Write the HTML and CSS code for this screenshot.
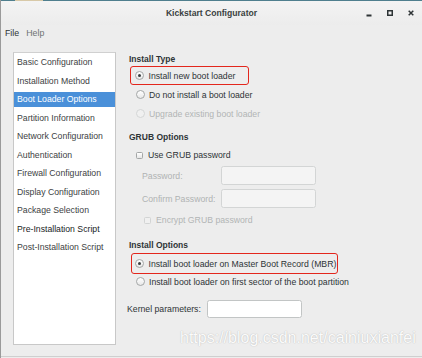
FILE: index.html
```html
<!DOCTYPE html>
<html>
<head>
<meta charset="utf-8">
<title>Kickstart Configurator</title>
<link rel="stylesheet" href="styles.css">
</head>
<body>
<div class="window">
  <div class="titlebar">
    <div class="topline"><span class="topline-beige"></span></div>
    <div class="tb-spacer"></div>
    <div class="title">Kickstart Configurator</div>
    <div class="controls">
      <span class="ctl">
        <svg width="8" height="8" viewBox="0 0 8 8"><rect x="1.5" y="5.5" width="5" height="2" fill="#2e3436"/></svg>
      </span>
      <span class="ctl">
        <svg width="8" height="8" viewBox="0 0 8 8"><rect x="1.75" y="1.75" width="4.5" height="4.5" fill="none" stroke="#2e3436" stroke-width="1.5"/></svg>
      </span>
      <span class="ctl">
        <svg width="8" height="8" viewBox="0 0 8 8"><path d="M1.7 1.7 L6.3 6.3 M6.3 1.7 L1.7 6.3" stroke="#2e3436" stroke-width="1.5" fill="none"/></svg>
      </span>
    </div>
  </div>
  <div class="menubar">
    <span class="menu-item">File</span>
    <span class="menu-item menu-dim">Help</span>
  </div>
  <div class="main">
    <ul class="sidebar">
      <li class="side-item">Basic Configuration</li>
      <li class="side-item">Installation Method</li>
      <li class="side-item side-selected">Boot Loader Options</li>
      <li class="side-item">Partition Information</li>
      <li class="side-item">Network Configuration</li>
      <li class="side-item">Authentication</li>
      <li class="side-item">Firewall Configuration</li>
      <li class="side-item">Display Configuration</li>
      <li class="side-item">Package Selection</li>
      <li class="side-item side-dark">Pre-Installation Script</li>
      <li class="side-item">Post-Installation Script</li>
    </ul>
    <div class="panel">
      <div class="heading">Install Type</div>
      <div class="annot annot-type">
        <span class="radio radio-checked"></span><span class="opt-text">Install new boot loader</span>
      </div>
      <div class="opt-row"><span class="radio"></span><span class="opt-text">Do not install a boot loader</span></div>
      <div class="opt-row opt-disabled"><span class="radio radio-disabled"></span><span class="opt-text">Upgrade existing boot loader</span></div>

      <div class="heading heading-grub">GRUB Options</div>
      <div class="check-row"><span class="check"></span><span class="opt-text">Use GRUB password</span></div>
      <div class="field-row">
        <span class="field-label">Password:</span><span class="entry entry-disabled"></span>
      </div>
      <div class="field-row field-row-2">
        <span class="field-label">Confirm Password:</span><span class="entry entry-disabled"></span>
      </div>
      <div class="check-row check-row-sub opt-disabled"><span class="check check-disabled"></span><span class="opt-text">Encrypt GRUB password</span></div>

      <div class="heading heading-opts">Install Options</div>
      <div class="annot annot-mbr">
        <span class="radio radio-checked"></span><span class="opt-text">Install boot loader on Master Boot Record (MBR)</span>
      </div>
      <div class="opt-row opt-row-short"><span class="radio"></span><span class="opt-text">Install boot loader on first sector of the boot partition</span></div>

      <div class="kernel-row">
        <span class="kernel-label">Kernel parameters:</span><span class="entry entry-kernel"></span>
      </div>
    </div>
  </div>
  <div class="bottomline"></div>
  <div class="watermark">https://blog.csdn.net/cainiuxianfei</div>
</div>
</body>
</html>
```

FILE: styles.css
```css
* { box-sizing: border-box; }
html, body { margin: 0; padding: 0; }
body {
  width: 422px;
  height: 358px;
  overflow: hidden;
  background: #ededed;
  font-family: "Liberation Sans", Arial, sans-serif;
  font-size: 8.7px;
  color: #2e3436;
}
.window {
  position: relative;
  width: 422px;
  height: 358px;
  background: #ededed;
  border-left: 1px solid #9a9a9a;
  display: flex;
  flex-direction: column;
}
.titlebar {
  position: relative;
  height: 25px;
  display: grid;
  grid-template-columns: 1fr auto 1fr;
  align-items: center;
  background: linear-gradient(#f4f4f4, #ececec);
}
.topline {
  position: absolute;
  left: 0; right: 0; top: 0;
  height: 1px;
  background: #4f7f8e;
}
.topline-beige {
  position: absolute;
  left: 14px; top: 0;
  width: 28px; height: 1px;
  background: #d8c9a8;
}
.title {
  font-weight: bold;
  font-size: 8.6px;
  color: #3a3f40;
  padding-top: 1px;
}
.controls {
  display: flex;
  justify-content: flex-end;
  align-items: center;
  gap: 7px;
  padding-right: 4px;
}
.ctl {
  width: 14px;
  height: 14px;
  display: flex;
  align-items: center;
  justify-content: center;
}
.ctl svg { display: block; }
.menubar {
  height: 15px;
  display: flex;
  align-items: center;
  gap: 7px;
  padding-left: 4px;
  font-size: 8.8px;
}
.menu-item { color: #2e3436; }
.menu-dim { color: #6e7272; }
.main {
  flex: 1;
  display: flex;
  padding-top: 12px;
  padding-left: 12px;
}
.sidebar {
  list-style: none;
  margin: 0;
  padding: 0;
  width: 103px;
  height: 293px;
  background: #ffffff;
  border: 1px solid #c8c8c8;
  border-top-color: #d0d0d0;
}
.side-item {
  height: 18.5px;
  line-height: 18.5px;
  padding-left: 3px;
  color: #3d4243;
  white-space: nowrap;
}
.side-dark { color: #1a1c1c; }
.side-selected {
  color: #ffffff;
  background: linear-gradient(transparent 1.5px, #4a90d9 1.5px, #4a90d9 17.5px, transparent 17.5px);
}
.panel {
  margin-left: 12px;
  display: flex;
  flex-direction: column;
  align-items: flex-start;
}
.heading {
  height: 14px;
  line-height: 14px;
  font-weight: bold;
  font-size: 8.5px;
  color: #2e3436;
  padding-left: 1px;
}
.heading-grub { margin-top: 7px; }
.heading-opts { margin-top: 6px; }
.annot {
  display: flex;
  align-items: center;
  border: 1.5px solid #e3261c;
  border-radius: 3px;
  padding-left: 4px;
}
.annot-type {
  margin-left: 2px;
  width: 119px;
  height: 19px;
}
.annot-mbr {
  margin-left: 3px;
  width: 207px;
  height: 21px;
  margin-top: 1px;
  padding-left: 3px;
}
.opt-row {
  display: flex;
  align-items: center;
  height: 19px;
  padding-left: 7.5px;
}
.opt-row-short { height: 15px; }
.opt-text {
  margin-left: 4.5px;
  white-space: nowrap;
}
.opt-disabled { color: #b2b5b5; }
.radio {
  width: 9px;
  height: 9px;
  border-radius: 50%;
  border: 1px solid #a4a7a7;
  background: linear-gradient(#ffffff, #e8e8e8);
  display: flex;
  align-items: center;
  justify-content: center;
  flex: none;
}
.radio-checked::after {
  content: "";
  width: 3px;
  height: 3px;
  border-radius: 50%;
  background: #3a3f40;
}
.radio-disabled {
  border-color: #d4d6d6;
  background: #f0f0f0;
}
.check-row {
  display: flex;
  align-items: center;
  height: 22px;
  padding-left: 8px;
}
.check-row .opt-text { margin-left: 5px; }
.check-row-sub {
  height: 24px;
  padding-left: 16px;
}
.check {
  width: 7px;
  height: 7px;
  border: 1px solid #a4a7a7;
  border-radius: 1.5px;
  background: linear-gradient(#ffffff, #e6e6e6);
  flex: none;
}
.check-disabled {
  border-color: #d2d4d4;
  background: #f0f0f0;
}
.field-row {
  display: flex;
  align-items: center;
  height: 19px;
  padding-left: 14px;
}
.field-row-2 { margin-top: 4px; }
.field-label {
  width: 79px;
  color: #b0b3b3;
  white-space: nowrap;
}
.entry {
  display: block;
  width: 95px;
  height: 19px;
  border-radius: 2.5px;
}
.entry-disabled {
  background: #f4f4f4;
  border: 1px solid #d3d5d5;
}
.kernel-row {
  display: flex;
  align-items: center;
  height: 18px;
  margin-top: 11px;
  margin-left: -1px;
}
.kernel-label {
  width: 80px;
  white-space: nowrap;
}
.entry-kernel {
  height: 18px;
  background: #ffffff;
  border: 1px solid #c2c5c5;
}
.bottomline {
  height: 1px;
  background: #cfcfcf;
  margin-bottom: 1px;
}
.watermark {
  position: absolute;
  left: 179px;
  top: 329px;
  font-family: "Liberation Sans", Arial, sans-serif;
  font-size: 16px;
  line-height: 18px;
  color: #fbfbfb;
  text-shadow: 0 0 1.2px rgba(0, 0, 0, 0.28);
  white-space: nowrap;
}
```
